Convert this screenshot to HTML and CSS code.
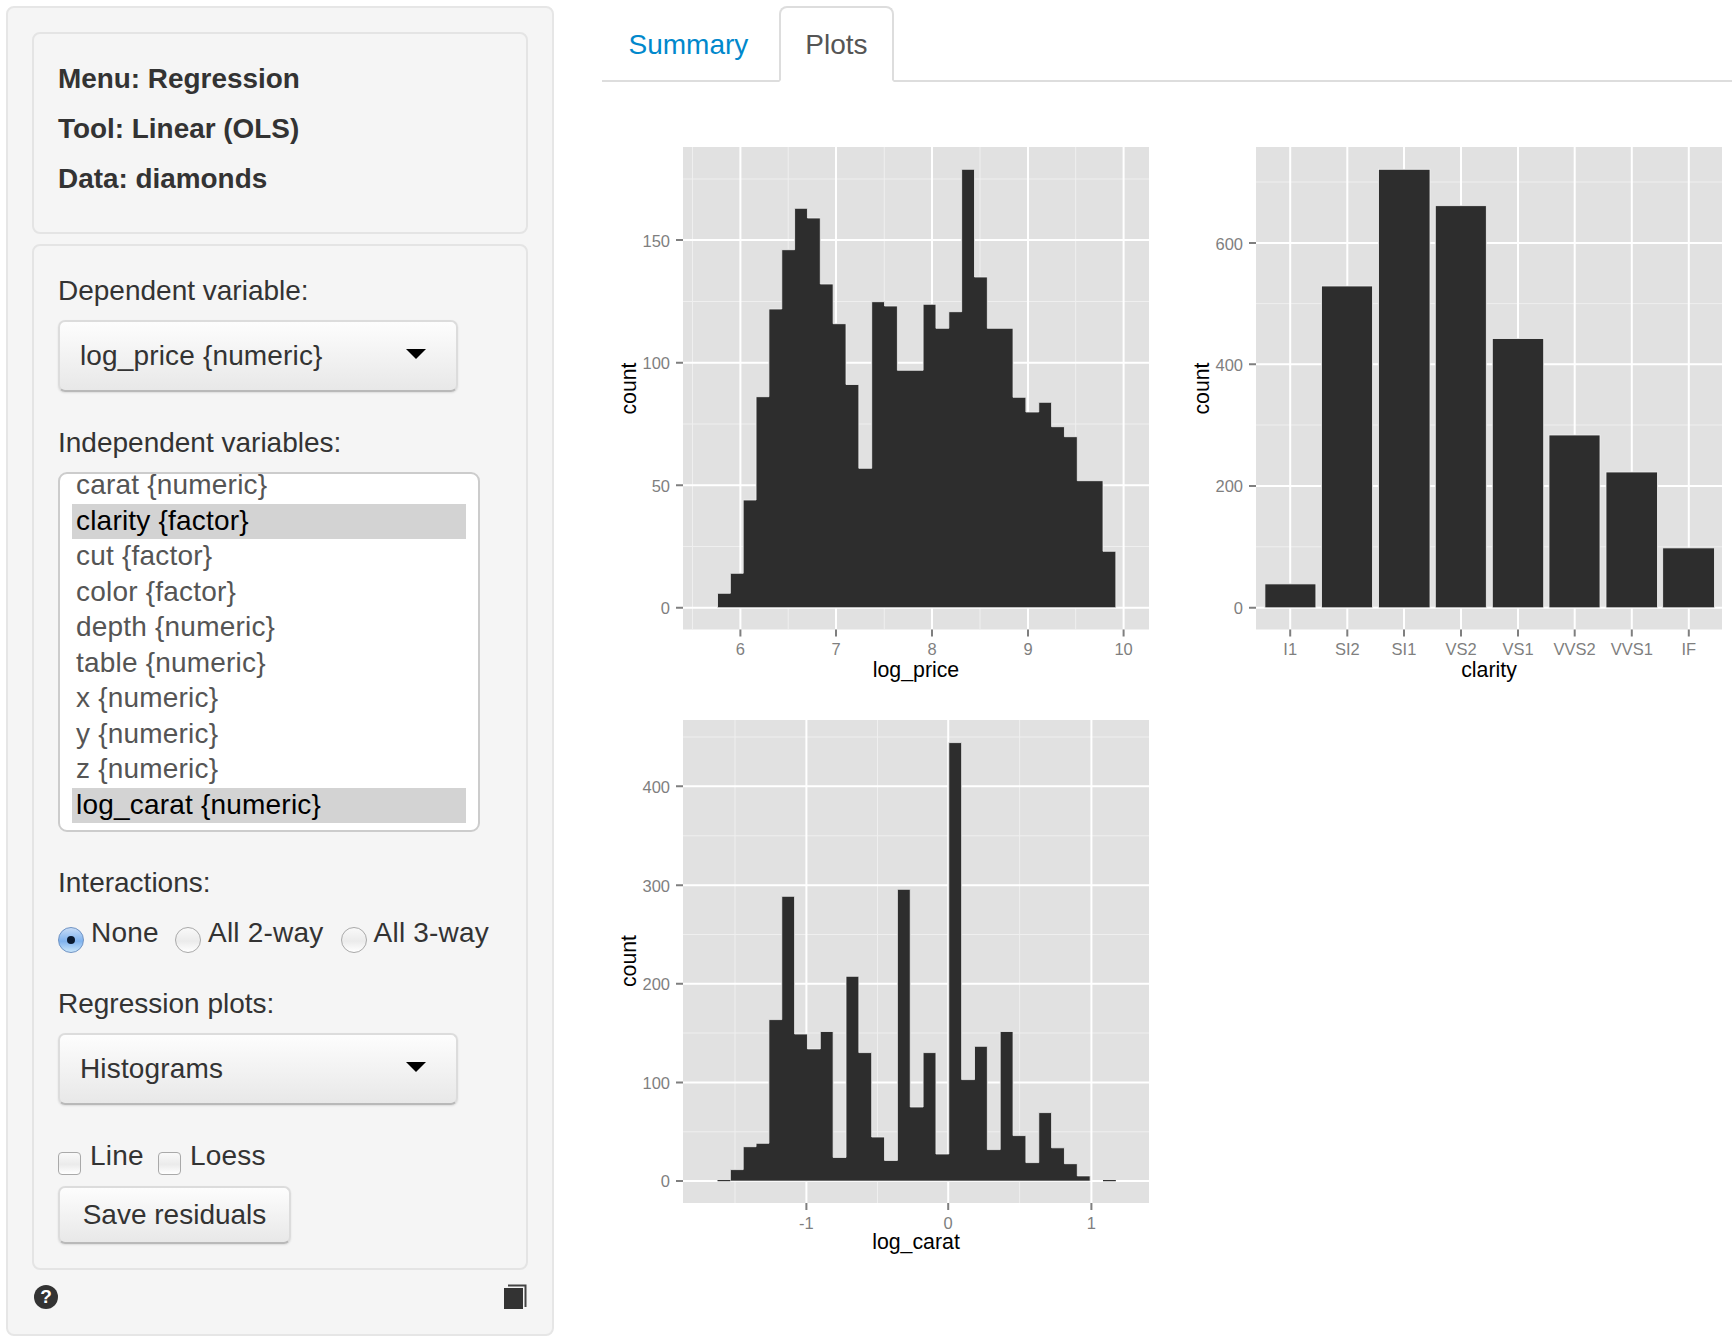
FILE: index.html
```html
<!DOCTYPE html>
<html lang="en">
<head>
    <meta charset="UTF-8">
    <title>Regression - Linear (OLS)</title>
    <link rel="stylesheet" href="styles.css">
</head>
<body>
<div class="page">

    <div class="sidebar">
        <div class="well well-info">
            <h4>Menu: Regression</h4>
            <h4>Tool: Linear (OLS)</h4>
            <h4>Data: diamonds</h4>
        </div>

        <div class="well well-form">
            <div class="field">
                <div class="field-label">Dependent variable:</div>
                <div class="select"><span>log_price {numeric}</span><span class="caret"></span></div>
            </div>

            <div class="field">
                <div class="field-label">Independent variables:</div>
                <div class="listbox">
                    <div class="option option-first">carat {numeric}</div>
                    <div class="option selected">clarity {factor}</div>
                    <div class="option">cut {factor}</div>
                    <div class="option">color {factor}</div>
                    <div class="option">depth {numeric}</div>
                    <div class="option">table {numeric}</div>
                    <div class="option">x {numeric}</div>
                    <div class="option">y {numeric}</div>
                    <div class="option">z {numeric}</div>
                    <div class="option selected">log_carat {numeric}</div>
                </div>
            </div>

            <div class="field">
                <div class="field-label">Interactions:</div>
                <div class="radios">
                    <label class="choice"><span class="radio radio-on"></span>None</label>
                    <label class="choice"><span class="radio"></span>All 2-way</label>
                    <label class="choice"><span class="radio"></span>All 3-way</label>
                </div>
            </div>

            <div class="field">
                <div class="field-label">Regression plots:</div>
                <div class="select"><span>Histograms</span><span class="caret"></span></div>
            </div>

            <div class="checks">
                <label class="choice"><span class="check"></span>Line</label>
                <label class="choice"><span class="check"></span>Loess</label>
            </div>
            <button class="btn">Save residuals</button>
        </div>

        <div class="sidebar-icons">
            <span class="help">?</span>
            <svg class="book" viewBox="0 0 24 25" width="24" height="25">
                <path d="M5 1.5H22.5V23" fill="none" stroke="#444" stroke-width="2"/>
                <rect x="1" y="4" width="19" height="21" fill="#333"/>
            </svg>
        </div>
    </div>

    <div class="main">
        <div class="tabs">
            <a class="tab">Summary</a>
            <a class="tab active">Plots</a>
        </div>

        <div class="plots">
            <!-- log_price -->
            <svg class="plot" viewBox="602 131 573 573" width="573" height="573">
                <rect class="panel" x="683" y="147" width="466" height="482.5"/>
                <path class="grid-minor" d="M683 179H1149M683 301.5H1149M683 424H1149M683 546.5H1149M692.5 147V629.5M788.2 147V629.5M884.3 147V629.5M980 147V629.5M1075.7 147V629.5"/>
                <path class="grid-major" d="M683 240H1149M683 362.7H1149M683 485.3H1149M683 607.7H1149M740.4 147V629.5M836 147V629.5M932 147V629.5M1028 147V629.5M1123.6 147V629.5"/>
                <path class="bars" d="M717.5 607.7V593.3H730.35V573.3H743.2V500H756.05V396.7H768.9V309H781.75V249.7H794.6V208.3H807.45V218H820.3V284H833.15V323.7H846V384.5H858.85V468.3H871.7V301.7H884.55V306H897.4V370.3H923.1V304.3H935.95V328.3H948.8V311.7H961.65V169.3H974.5V277H987.35V328.3H1013.05V397.3H1025.9V412H1038.75V402.3H1051.6V426.7H1064.45V436.7H1077.3V480.7H1103V551.3H1115.85V607.7Z"/>
                <path class="tick" d="M676 240H683M676 362.7H683M676 485.3H683M676 607.7H683M740.4 629.5V636.5M836 629.5V636.5M932 629.5V636.5M1028 629.5V636.5M1123.6 629.5V636.5"/>
                <text class="tick-label end" x="670" y="247">150</text>
                <text class="tick-label end" x="670" y="369">100</text>
                <text class="tick-label end" x="670" y="492">50</text>
                <text class="tick-label end" x="670" y="614">0</text>
                <text class="tick-label" x="740.4" y="655">6</text>
                <text class="tick-label" x="836" y="655">7</text>
                <text class="tick-label" x="932" y="655">8</text>
                <text class="tick-label" x="1028" y="655">9</text>
                <text class="tick-label" x="1123.6" y="655">10</text>
                <text class="axis-title" x="916" y="677">log_price</text>
                <text class="axis-title" x="636" y="388.5" transform="rotate(-90 636 388.5)">count</text>
            </svg>

            <!-- clarity -->
            <svg class="plot" viewBox="1175 131 557 573" width="557" height="573">
                <rect class="panel" x="1256" y="147" width="466" height="482.5"/>
                <path class="grid-minor" d="M1256 182H1722M1256 303.6H1722M1256 425H1722M1256 546.8H1722"/>
                <path class="grid-major" d="M1256 242.9H1722M1256 364.3H1722M1256 486H1722M1256 607.8H1722M1290.2 147V629.5M1347.3 147V629.5M1404 147V629.5M1461 147V629.5M1518 147V629.5M1574.7 147V629.5M1631.8 147V629.5M1688.8 147V629.5"/>
                <rect class="bars" x="1264.9" y="583.9" width="51" height="23.9"/>
                <rect class="bars" x="1321.5" y="286" width="51" height="321.8"/>
                <rect class="bars" x="1378.6" y="169.3" width="51.4" height="438.5"/>
                <rect class="bars" x="1435.3" y="205.7" width="51" height="402.1"/>
                <rect class="bars" x="1492.3" y="338.6" width="51.4" height="269.2"/>
                <rect class="bars" x="1549" y="435" width="51" height="172.8"/>
                <rect class="bars" x="1606" y="472" width="51.4" height="135.8"/>
                <rect class="bars" x="1662.7" y="547.9" width="51.8" height="59.9"/>
                <path class="tick" d="M1249 242.9H1256M1249 364.3H1256M1249 486H1256M1249 607.8H1256M1290.2 629.5V636.5M1347.3 629.5V636.5M1404 629.5V636.5M1461 629.5V636.5M1518 629.5V636.5M1574.7 629.5V636.5M1631.8 629.5V636.5M1688.8 629.5V636.5"/>
                <text class="tick-label end" x="1243" y="250">600</text>
                <text class="tick-label end" x="1243" y="371">400</text>
                <text class="tick-label end" x="1243" y="492">200</text>
                <text class="tick-label end" x="1243" y="614">0</text>
                <text class="tick-label" x="1290.2" y="655">I1</text>
                <text class="tick-label" x="1347.3" y="655">SI2</text>
                <text class="tick-label" x="1404" y="655">SI1</text>
                <text class="tick-label" x="1461" y="655">VS2</text>
                <text class="tick-label" x="1518" y="655">VS1</text>
                <text class="tick-label" x="1574.7" y="655">VVS2</text>
                <text class="tick-label" x="1631.8" y="655">VVS1</text>
                <text class="tick-label" x="1688.8" y="655">IF</text>
                <text class="axis-title" x="1489" y="677">clarity</text>
                <text class="axis-title" x="1209" y="388.5" transform="rotate(-90 1209 388.5)">count</text>
            </svg>

            <!-- log_carat -->
            <svg class="plot" viewBox="602 704 573 573" width="573" height="573">
                <rect class="panel" x="683" y="720" width="466" height="483"/>
                <path class="grid-minor" d="M683 737H1149M683 835.8H1149M683 934.5H1149M683 1033H1149M683 1131.8H1149M735 720V1203M877.5 720V1203M1019.6 720V1203"/>
                <path class="grid-major" d="M683 786.3H1149M683 885.2H1149M683 983.7H1149M683 1082.6H1149M683 1181.1H1149M806.4 720V1203M948.2 720V1203M1091.4 720V1203"/>
                <path class="bars" d="M730.35 1181.1V1169.6H743.2V1146.7H756.05V1143.3H768.9V1019.6H781.75V896.3H794.6V1034H807.45V1048.9H820.3V1031.5H833.15V1157.4H846V976.3H858.85V1052.6H871.7V1137H884.55V1160.4H897.4V889.3H910.25V1107H923.1V1052.6H935.95V1154H948.8V742.6H961.65V1079.6H974.5V1046.3H987.35V1149.6H1000.2V1031.5H1013.05V1135.6H1025.9V1162.6H1038.75V1112.6H1051.6V1147.8H1064.45V1163.7H1077.3V1175.9H1090.15V1181.1Z"/>
                <path class="bars-thin" d="M717.5 1180.6H730.35M1103 1180.6H1115.85"/>
                <path class="tick" d="M676 786.3H683M676 885.2H683M676 983.7H683M676 1082.6H683M676 1181.1H683M806.4 1203V1210M948.2 1203V1210M1091.4 1203V1210"/>
                <text class="tick-label end" x="670" y="793">400</text>
                <text class="tick-label end" x="670" y="892">300</text>
                <text class="tick-label end" x="670" y="990">200</text>
                <text class="tick-label end" x="670" y="1089">100</text>
                <text class="tick-label end" x="670" y="1187">0</text>
                <text class="tick-label" x="806.4" y="1229">-1</text>
                <text class="tick-label" x="948.2" y="1229">0</text>
                <text class="tick-label" x="1091.4" y="1229">1</text>
                <text class="axis-title" x="916" y="1249">log_carat</text>
                <text class="axis-title" x="636" y="961" transform="rotate(-90 636 961)">count</text>
            </svg>
        </div>
    </div>

</div>
</body>
</html>
```
FILE: styles.css
```css
body {
    margin: 0;
    background-color: #fff;
    font-family: "Liberation Sans", Arial, sans-serif;
    font-size: 28px;
    color: #333;
}

.page {
    display: flex;
    align-items: flex-start;
    width: 1732px;
    height: 1340px;
    overflow: hidden;
}

/* left column */
.sidebar {
    box-sizing: border-box;
    width: 548px;
    height: 1330px;
    margin: 6px 0 0 6px;
    padding: 24px 24px 0;
    background-color: #f5f5f5;
    border: 2px solid #e6e6e6;
    border-radius: 8px;
    flex-shrink: 0;
}

.well {
    background-color: #f5f5f5;
    border: 2px solid #e4e4e4;
    border-radius: 8px;
}

.well-info {
    padding: 20px 24px 28px;
    margin-bottom: 10px;
}

.well-info h4 {
    margin: 0;
    font-size: 27.9px;
    line-height: 50px;
    font-weight: bold;
}

.well-form {
    padding: 24px 24px 24px;
}

.field {
    margin-bottom: 30px;
}

.field-label {
    line-height: 42px;
    margin-bottom: 8px;
}

.select {
    box-sizing: border-box;
    display: flex;
    justify-content: space-between;
    align-items: center;
    width: 400px;
    height: 72px;
    padding: 0 30px 0 20px;
    letter-spacing: 0.15px;
    background: linear-gradient(#fdfdfd, #e8e8e8);
    border: 2px solid #dcdcdc;
    border-bottom-color: #b9b9b9;
    border-radius: 7px;
    box-shadow: 0 1px 2px rgba(0, 0, 0, 0.1);
}

.caret {
    width: 0;
    height: 0;
    margin-top: -4px;
    border-left: 10.5px solid transparent;
    border-right: 10.5px solid transparent;
    border-top: 10px solid #000;
}

.listbox {
    box-sizing: border-box;
    width: 422px;
    height: 360px;
    padding: 0 12px;
    background-color: #fff;
    border: 2px solid #ccc;
    border-radius: 9px;
    overflow: hidden;
}

.option {
    height: 35.5px;
    line-height: 33px;
    padding-left: 4px;
    color: #555;
    letter-spacing: 0.2px;
}

.option-first {
    margin-top: -6px;
}

.option.selected {
    background-color: #d3d3d3;
    color: #000;
}

.radios {
    display: grid;
    grid-template-columns: 117px 165.6px auto;
    height: 41px;
    line-height: 42px;
}

.checks {
    display: grid;
    grid-template-columns: 100px auto;
    height: 42px;
    line-height: 42px;
    margin-bottom: 9px;
}

.choice {
    display: flex;
    align-items: flex-start;
    letter-spacing: 0.2px;
}

.radio {
    box-sizing: border-box;
    position: relative;
    width: 26px;
    height: 26px;
    margin: 15px 7px 0 0;
    border: 1px solid #a9a9a9;
    border-radius: 50%;
    background: linear-gradient(#f9f9f9, #ebebeb 55%, #fff);
}

.radio-on {
    border-color: #6f93c4;
    background: linear-gradient(#c7dcf6, #7fb2ee 55%, #c9e6fb);
}

/* the dot of the chosen radio */
.radio-on::after {
    content: "";
    position: absolute;
    left: 8px;
    top: 8px;
    width: 8px;
    height: 8px;
    border-radius: 50%;
    background-color: #0a1a30;
}

.check {
    box-sizing: border-box;
    width: 23px;
    height: 23px;
    margin: 17px 9px 0 0;
    border: 1px solid #a9a9a9;
    border-radius: 4px;
    background: linear-gradient(#f9f9f9, #ebebeb 55%, #fff);
}

.btn {
    display: block;
    box-sizing: border-box;
    width: 233px;
    height: 58px;
    padding: 0;
    font-family: inherit;
    font-size: 28px;
    color: #333;
    background: linear-gradient(#fdfdfd, #e8e8e8);
    border: 2px solid #dcdcdc;
    border-bottom-color: #b9b9b9;
    border-radius: 7px;
    box-shadow: 0 1px 2px rgba(0, 0, 0, 0.1);
}

.sidebar-icons {
    display: flex;
    justify-content: space-between;
    align-items: center;
    margin-top: 14px;
    padding: 0 1px 0 2px;
}

.help {
    width: 24px;
    height: 24px;
    border-radius: 50%;
    background-color: #333;
    color: #fff;
    font-size: 19px;
    font-weight: bold;
    line-height: 24px;
    text-align: center;
}

/* right column */
.main {
    width: 1130px;
    margin-left: 48px;
}

.tabs {
    display: flex;
    height: 82px;
    box-sizing: border-box;
    padding: 6px 0 0 0;
    border-bottom: 2px solid #ddd;
}

.tab {
    box-sizing: border-box;
    height: 76px;
    padding: 0 24.5px;
    line-height: 73px;
    color: #08c;
    margin-right: 4px;
    border: 2px solid transparent;
}

.tab.active {
    color: #555;
    background-color: #fff;
    border-color: #ddd;
    border-bottom-color: #fff;
    border-radius: 8px 8px 0 0;
}

.plots {
    display: grid;
    grid-template-columns: 573px 557px;
    margin-top: 49px;
}

.plot {
    display: block;
}

.panel {
    fill: #e1e1e1;
}

.grid-minor {
    fill: none;
    stroke: #efefef;
    stroke-width: 1;
}

.grid-major {
    fill: none;
    stroke: #fff;
    stroke-width: 2;
}

.bars {
    fill: #2d2d2d;
    stroke: #f0f0f0;
    stroke-width: 0.8;
}

.bars-thin {
    fill: none;
    stroke: #333;
    stroke-width: 1.2;
}

.tick {
    fill: none;
    stroke: #7f7f7f;
    stroke-width: 2;
}

.tick-label {
    font-size: 16.5px;
    fill: #7f7f7f;
    text-anchor: middle;
}

.tick-label.end {
    text-anchor: end;
}

.axis-title {
    font-size: 21.3px;
    fill: #000;
    text-anchor: middle;
}
```
